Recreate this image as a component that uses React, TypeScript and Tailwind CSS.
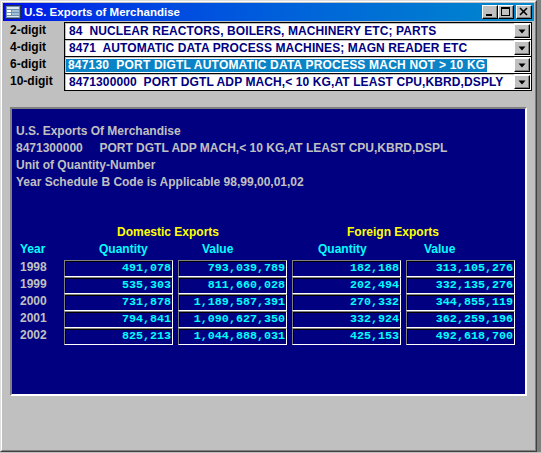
import React from "react";

const raised =
  "border border-t-white border-l-white border-r-black border-b-black shadow-[inset_-1px_-1px_0_#808080] bg-[#c0c0c0]";

function TitleButton({ kind }: { kind: "min" | "max" | "close" }) {
  return (
    <div className={`w-[16px] h-[14px] flex items-center justify-center ${raised}`}>
      <svg width="14" height="12" viewBox="0 0 14 12">
        {kind === "min" && <rect x="3" y="8" width="6" height="2" fill="#000" />}
        {kind === "max" && (
          <g fill="none" stroke="#000">
            <rect x="2.5" y="1.5" width="8" height="8" />
            <line x1="2" y1="2.5" x2="11" y2="2.5" />
          </g>
        )}
        {kind === "close" && (
          <g stroke="#000" strokeWidth="1.6">
            <line x1="3" y1="2" x2="10" y2="9" />
            <line x1="10" y1="2" x2="3" y2="9" />
          </g>
        )}
      </svg>
    </div>
  );
}

function Combo({ text, selected, first }: { text: string; selected?: boolean; first?: boolean }) {
  return (
    <div className={`h-[18px] border border-black flex ${first ? "" : "-mt-px"}`}>
      <div className="flex-1 bg-white shadow-[inset_1px_1px_0_#c0c0c0] flex items-center pl-[1px] overflow-hidden">
        {selected ? (
          <span className="bg-[#0a84c6] text-white leading-[13px] px-[2px] whitespace-pre text-[12px] font-bold tracking-[0.2px]">
            {text}
          </span>
        ) : (
          <span className="text-[#000080] leading-[16px] pl-[3px] whitespace-pre text-[12px] font-bold tracking-[0.1px]">{text}</span>
        )}
      </div>
      <div className="bg-white flex items-center pr-[1px]">
        <div className={`w-[16px] h-[14px] flex items-center justify-center ${raised}`}>
          <svg width="8" height="5" viewBox="0 0 8 5">
            <polygon points="0.5,0.5 7.5,0.5 4,4.5" fill="#000" />
          </svg>
        </div>
      </div>
    </div>
  );
}

function NumBox({ v }: { v: string }) {
  return (
    <div className="h-[17px] border border-t-[#808080] border-l-[#808080] border-r-white border-b-white shadow-[inset_1px_1px_0_#000] flex items-center justify-end pr-[1px]">
      <span className="font-['Liberation_Mono',monospace] font-bold text-[11.7px] leading-[15px] text-[#00ffff]">
        {v}
      </span>
    </div>
  );
}

const rows = [
  ["1998", "491,078", "793,039,789", "182,188", "313,105,276"],
  ["1999", "535,303", "811,660,028", "202,494", "332,135,276"],
  ["2000", "731,878", "1,189,587,391", "270,332", "344,855,119"],
  ["2001", "794,841", "1,090,627,350", "332,924", "362,259,196"],
  ["2002", "825,213", "1,044,888,031", "425,153", "492,618,700"],
];

export default function App() {
  return (
    <div className="w-[541px] h-[453px] bg-[#c0c0c0] flex font-['Liberation_Sans',Arial,sans-serif] overflow-hidden">
      <div className="w-[537px] h-[452px] border border-t-[#dfdfdf] border-l-[#dfdfdf] border-r-[#404040] border-b-[#404040]">
        <div className="w-full h-full border border-t-white border-l-white border-r-[#808080] border-b-[#808080] p-[1px] flex flex-col">
          {/* Title bar */}
          <div className="h-[18px] bg-gradient-to-r from-[#0008e8] to-[#0888cc] flex items-center pl-[2px] pr-[2px]">
            <svg width="16" height="14" viewBox="0 0 16 14" className="shrink-0">
              <rect x="0.5" y="0.5" width="15" height="13" fill="#7090b0" stroke="#203050" />
              <rect x="2" y="2" width="12" height="2" fill="#e0e8f0" />
              <rect x="2" y="5" width="4" height="2" fill="#ffffff" />
              <rect x="7" y="5" width="7" height="2" fill="#a0c0d8" />
              <rect x="2" y="8" width="4" height="2" fill="#ffffff" />
              <rect x="7" y="8" width="7" height="2" fill="#a0c0d8" />
              <rect x="2" y="11" width="12" height="1" fill="#e0e8f0" />
            </svg>
            <span className="ml-[3px] text-white font-bold text-[11.5px] leading-[18px] whitespace-nowrap">
              U.S. Exports of Merchandise
            </span>
            <div className="ml-auto flex items-center">
              <TitleButton kind="min" />
              <TitleButton kind="max" />
              <div className="w-[2px]" />
              <TitleButton kind="close" />
            </div>
          </div>

          {/* Selectors */}
          <div className="flex mt-[1px] pl-[7px] pr-[2px]">
            <div className="w-[54px] flex flex-col text-black font-bold text-[12px] leading-[17px]">
              <div className="h-[17px]">2-digit</div>
              <div className="h-[17px]">4-digit</div>
              <div className="h-[17px]">6-digit</div>
              <div className="h-[17px]">10-digit</div>
            </div>
            <div className="flex-1 flex flex-col">
              <Combo first text="84  NUCLEAR REACTORS, BOILERS, MACHINERY ETC; PARTS" />
              <Combo text="8471  AUTOMATIC DATA PROCESS MACHINES; MAGN READER ETC" />
              <Combo selected text="847130  PORT DIGTL AUTOMATIC DATA PROCESS MACH NOT > 10 KG" />
              <Combo text="8471300000  PORT DGTL ADP MACH,< 10 KG,AT LEAST CPU,KBRD,DSPLY" />
            </div>
          </div>

          {/* Report panel */}
          <div className="ml-[7px] mt-[16px] w-[517px] h-[289px] border-2 border-t-[#808080] border-l-[#808080] border-r-white border-b-white bg-[#000080]">
            <div className="pl-[4px] pt-[14px] text-[#c0c0c0] font-bold text-[12px] leading-[17px] whitespace-pre">
              <div>U.S. Exports Of Merchandise</div>
              <div>8471300000     PORT DGTL ADP MACH,&lt; 10 KG,AT LEAST CPU,KBRD,DSPL</div>
              <div>Unit of Quantity-Number</div>
              <div>Year Schedule B Code is Applicable 98,99,00,01,02</div>
            </div>

            <div className="mt-[33px] ml-[8px] grid grid-cols-[39px_repeat(4,109px)] gap-x-[5px] font-bold text-[12px] leading-[17px]">
              <div className="h-[17px]" />
              <div className="col-span-2 h-[17px] pl-[53px] text-[#ffff00] whitespace-nowrap">Domestic Exports</div>
              <div className="col-span-2 h-[17px] pl-[55px] text-[#ffff00] whitespace-nowrap">Foreign Exports</div>

              <div className="h-[19px] text-[#00ffff]">Year</div>
              <div className="h-[19px] pl-[35px] text-[#00ffff]">Quantity</div>
              <div className="h-[19px] pl-[24px] text-[#00ffff]">Value</div>
              <div className="h-[19px] pl-[26px] text-[#00ffff]">Quantity</div>
              <div className="h-[19px] pl-[18px] text-[#00ffff]">Value</div>

              {rows.map((r) => (
                <React.Fragment key={r[0]}>
                  <div className="h-[17px] text-[#c0c0c0] leading-[15px]">{r[0]}</div>
                  <NumBox v={r[1]} />
                  <NumBox v={r[2]} />
                  <NumBox v={r[3]} />
                  <NumBox v={r[4]} />
                </React.Fragment>
              ))}
            </div>
          </div>
        </div>
      </div>
      <div className="w-[4px] h-[452px] bg-[#808080]" />
    </div>
  );
}
